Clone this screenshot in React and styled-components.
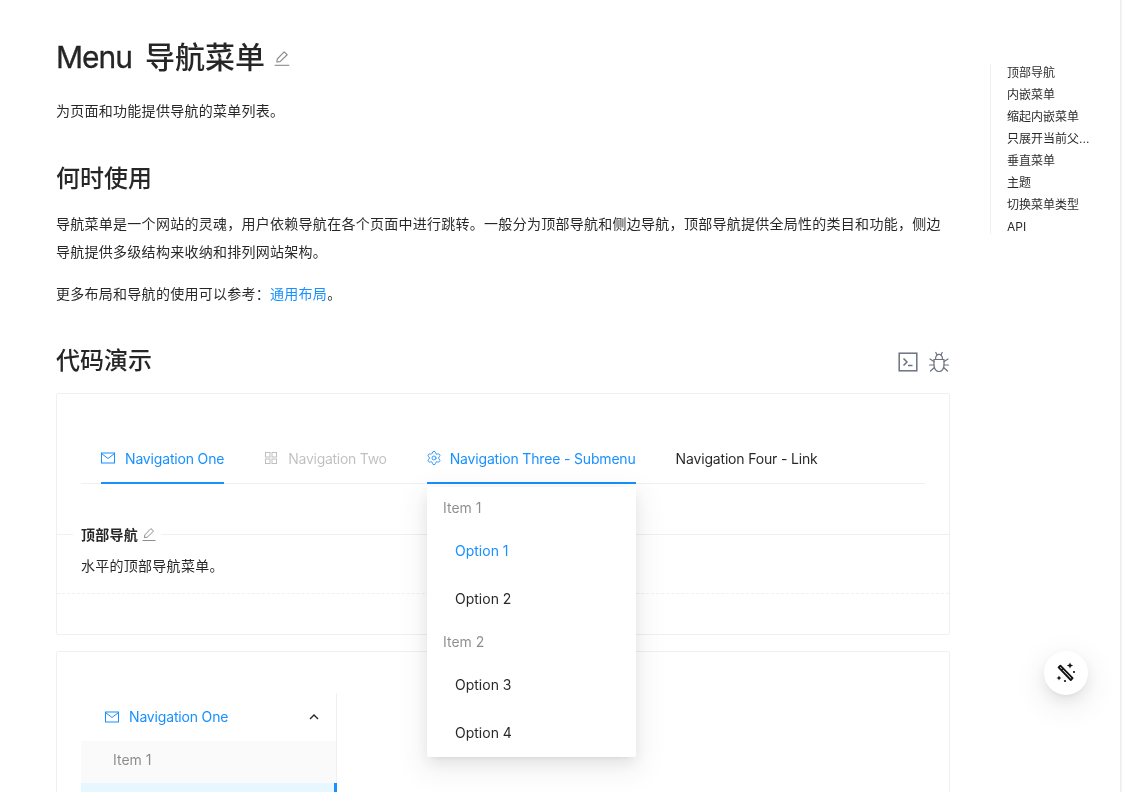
import React from "react";
import styled, { createGlobalStyle } from "styled-components";
import { Settings } from "lucide-react";

const blue = "#1890ff";
const text = "rgba(0, 0, 0, 0.85)";

const GlobalStyle = createGlobalStyle`
  html, body { margin: 0; padding: 0; background: #fff; }
  body {
    font-family: Inter, "Noto Sans CJK SC", sans-serif;
    font-size: 14px;
    color: ${text};
  }
  * { box-sizing: border-box; }
`;

const Page = styled.div`
  position: relative;
  width: 1123px;
  height: 792px;
  overflow: hidden;
  display: flex;
  will-change: opacity;
`;

const Content = styled.div`
  width: 1121px;
  height: 792px;
  border-right: 1px solid #ececec;
  box-shadow: 1px 0 3px rgba(0, 0, 0, 0.05);
  display: flex;
  overflow: hidden;
`;

const Main = styled.main`
  width: 950px;
  flex: none;
  padding: 36px 0 0 56px;
`;

const Title = styled.h1`
  margin: 0 0 19px;
  font-size: 30px;
  line-height: 42px;
  font-weight: 500;
  display: flex;
  align-items: center;
`;

const TitleLatin = styled.span`
  letter-spacing: -1px;
  margin-right: 13px;
  font-weight: 400;
  -webkit-text-stroke: 0.3px currentColor;
`;

const EditIcon = ({ size = 16, className }) => (
  <svg className={className} width={size} height={size} viewBox="0 0 16 16" fill="none" stroke="#8c8c8c" strokeWidth="1">
    <path d="M3.4 11.6 3.8 8.9 9.9 2.6 12.6 5.1 6.3 11.2Z" strokeLinejoin="round" />
    <path d="M1.5 14.5H14.5" />
  </svg>
);

const TitleEdit = styled(EditIcon)`
  margin: 2px 0 0 8px;
`;

const Para = styled.p`
  margin: 0 0 14px;
  line-height: 28px;
  font-size: 14px;
  letter-spacing: 0.27px;
`;

const Heading = styled.h2`
  margin: 0;
  font-size: 24px;
  line-height: 32px;
  font-weight: 500;
`;

const WhenHeading = styled(Heading)`
  margin: 38px 0 15px;
`;

const DemoHeader = styled.div`
  display: flex;
  align-items: center;
  justify-content: space-between;
  margin: 37px 0 16px;
  height: 32px;
`;

const Actions = styled.div`
  display: flex;
  align-items: center;
  gap: 10px;
  margin-top: 2px;
  color: #6b7280;
`;

const Link = styled.a`
  color: ${blue};
  text-decoration: none;
`;

const Card = styled.section`
  position: relative;
  margin: 0 0 16px;
  border: 1px solid #f0f0f0;
  border-radius: 2px;
`;

const TopCard = styled(Card)`
  height: 242px;
`;

const DemoArea = styled.div`
  padding: 42px 24px 50px;
`;

const TopNav = styled.ul`
  list-style: none;
  margin: 0;
  padding: 0 0 0 20px;
  height: 48px;
  display: flex;
  gap: 40px;
  border-bottom: 1px solid #f0f0f0;
`;

const NavItem = styled.li`
  height: 48px;
  padding-bottom: 2px;
  display: flex;
  align-items: center;
  gap: 10px;
  white-space: nowrap;
  letter-spacing: ${(p) => (p.$disabled ? "-0.27px" : "-0.17px")};
  color: ${(p) => (p.$disabled ? "rgba(0,0,0,0.25)" : p.$active ? blue : text)};
  border-bottom: 2px solid ${(p) => (p.$active ? blue : "transparent")};
`;

const Meta = styled.div`
  border-top: 1px solid #f0f0f0;
`;

const MetaTitle = styled.div`
  display: flex;
  align-items: center;
  gap: 3px;
  width: 88px;
  height: 20px;
  margin: -11px 0 8px 16px;
  padding-left: 8px;
  background: #fff;
  font-weight: 600;
  letter-spacing: 0.27px;
`;

const MetaDesc = styled.p`
  margin: 0;
  padding: 0 24px;
  line-height: 28px;
  height: 42px;
  letter-spacing: 0.27px;
  border-bottom: 1px dashed #f0f0f0;
`;

const SideMenu = styled.div`
  margin: 41px 0 0 24px;
  width: 256px;
  border-right: 1px solid #f0f0f0;
`;

const SubTitle = styled.div`
  height: 48px;
  padding: 0 17px 1px 24px;
  display: flex;
  align-items: center;
  gap: 10px;
  letter-spacing: -0.17px;
  color: ${blue};
`;

const Caret = styled.svg`
  margin-left: auto;
`;

const GroupTitle = styled.div`
  background: #fafafa;
  height: 42px;
  padding: 0 0 6px 32px;
  display: flex;
  align-items: center;
  color: rgba(0, 0, 0, 0.45);
`;

const SelectedRow = styled.div`
  height: 40px;
  background: #e6f7ff;
  border-right: 3px solid ${blue};
  margin-right: -1px;
`;

const Dropdown = styled.div`
  position: absolute;
  left: 427px;
  top: 487px;
  width: 209px;
  height: 270px;
  background: #fff;
  border-radius: 2px;
  box-shadow: 0 3px 6px -4px rgba(0, 0, 0, 0.12), 0 6px 16px 0 rgba(0, 0, 0, 0.08), 0 9px 28px 8px rgba(0, 0, 0, 0.05);
`;

const DropGroup = styled.div`
  height: 42px;
  margin-bottom: 2px;
  padding: 0 16px 2px;
  display: flex;
  align-items: center;
  color: rgba(0, 0, 0, 0.45);
`;

const DropItem = styled.div`
  height: 40px;
  padding: 0 0 2px 28px;
  display: flex;
  align-items: center;
  color: ${(p) => (p.$active ? blue : text)};

  & + & {
    margin-top: 8px;
  }

  & + ${DropGroup} {
    margin-top: 2px;
  }
`;

const Anchor = styled.nav`
  position: absolute;
  left: 990px;
  top: 64px;
  width: 104px;
  height: 170px;
  border-left: 1px solid #f0f0f0;
  padding-left: 16px;
`;

const AnchorLink = styled.div`
  height: 22px;
  line-height: 17px;
  padding-top: 0;
  font-size: 12px;
  white-space: nowrap;
  overflow: hidden;
  text-overflow: ellipsis;
`;

const FloatButton = styled.div`
  position: absolute;
  left: 1044px;
  top: 651px;
  width: 44px;
  height: 44px;
  border-radius: 50%;
  background: #fff;
  box-shadow: 0 3px 6px -4px rgba(0, 0, 0, 0.12), 0 6px 16px 0 rgba(0, 0, 0, 0.08), 0 9px 28px 8px rgba(0, 0, 0, 0.05);
  display: flex;
  align-items: center;
  justify-content: center;
`;

const Mail = ({ color = blue }) => (
  <svg width="14" height="14" viewBox="0 0 14 14" fill="none" stroke={color} strokeWidth="1">
    <rect x="0.5" y="2" width="13" height="10" />
    <path d="M0.8 2.8 7 7.5 13.2 2.8" />
  </svg>
);

const Apps = () => (
  <svg width="14" height="14" viewBox="0 0 14 14" fill="none" stroke="rgba(0,0,0,0.25)" strokeWidth="1">
    <rect x="1.5" y="1.5" width="4.5" height="4.5" />
    <rect x="8" y="1.5" width="4.5" height="4.5" />
    <rect x="1.5" y="8" width="4.5" height="4.5" />
    <rect x="8" y="8" width="4.5" height="4.5" />
  </svg>
);

const Gear = styled(Settings)`
  margin: 0 -2px 0 -1px;
  flex: none;
`;

const CodeIcon = () => (
  <svg width="20" height="20" viewBox="0 0 20 20" fill="none" stroke="#6b7280" strokeWidth="1.5">
    <rect x="1.2" y="1.2" width="17.6" height="17.6" />
    <path d="M5.5 6.5 9 10 5.5 13.5" />
    <path d="M10 13.5H14.5" />
  </svg>
);

const BugIcon = () => (
  <svg width="22" height="22" viewBox="0 0 22 22" fill="none" stroke="#6b7280" strokeWidth="1.2" strokeLinecap="round">
    <path d="M6 8.5H16V14C16 17.5 14 20.5 11 20.5S6 17.5 6 14Z" />
    <path d="M7.5 8.5C7.5 5 9 3.4 11 3.4S14.5 5 14.5 8.5" />
    <path d="M7.8 1.5 9 3.8M14.2 1.5 13 3.8" />
    <path d="M2 8 6 10.5M20 8 16 10.5M1.5 14H6M20.5 14H16M2.5 20 6.4 16.5M19.5 20 15.6 16.5" />
  </svg>
);

const Wand = () => (
  <svg width="22" height="22" viewBox="0 0 22 22" fill="#111">
    <path d="M3.6 5.4 5.4 3.6 17.6 16.2 15.8 18Z" fill="none" stroke="#111" strokeWidth="1.8" strokeLinejoin="round" />
    <path d="M6 7.6 7.8 5.8 8.8 6.8 7 8.6Z" />
    <path d="M15 .4 15.9 2.6 18.1 3.5 15.9 4.4 15 6.6 14.1 4.4 11.9 3.5 14.1 2.6Z" />
    <path d="M4 13.5 4.8 15.2 6.5 16 4.8 16.8 4 18.5 3.2 16.8 1.5 16 3.2 15.2Z" />
    <circle cx="19" cy="10" r="1.1" />
    <circle cx="10" cy="19" r="1.1" />
  </svg>
);

const anchors = ["顶部导航", "内嵌菜单", "缩起内嵌菜单", "只展开当前父...", "垂直菜单", "主题", "切换菜单类型", "API"];

export default function App() {
  return (
    <>
      <GlobalStyle />
      <Page>
        <Content>
          <Main>
            <Title>
              <TitleLatin>Menu</TitleLatin>
              导航菜单
              <TitleEdit size={18} />
            </Title>
            <Para>为页面和功能提供导航的菜单列表。</Para>
            <WhenHeading>何时使用</WhenHeading>
            <Para>
              导航菜单是一个网站的灵魂，用户依赖导航在各个页面中进行跳转。一般分为顶部导航和侧边导航，顶部导航提供全局性的类目和功能，侧边导航提供多级结构来收纳和排列网站架构。
            </Para>
            <Para>
              更多布局和导航的使用可以参考：<Link>通用布局</Link>。
            </Para>
            <DemoHeader>
              <Heading>代码演示</Heading>
              <Actions>
                <CodeIcon />
                <BugIcon />
              </Actions>
            </DemoHeader>
            <TopCard>
              <DemoArea>
                <TopNav>
                  <NavItem $active>
                    <Mail />
                    Navigation One
                  </NavItem>
                  <NavItem $disabled>
                    <Apps />
                    Navigation Two
                  </NavItem>
                  <NavItem $active>
                    <Gear size={16} strokeWidth={1.3} color={blue} />
                    Navigation Three - Submenu
                  </NavItem>
                  <NavItem>Navigation Four - Link</NavItem>
                </TopNav>
              </DemoArea>
              <Meta>
                <MetaTitle>
                  顶部导航
                  <EditIcon size={16} />
                </MetaTitle>
                <MetaDesc>水平的顶部导航菜单。</MetaDesc>
              </Meta>
            </TopCard>
            <Card>
              <SideMenu>
                <SubTitle>
                  <Mail />
                  Navigation One
                  <Caret width="10" height="10" viewBox="0 0 10 10" fill="none" stroke={text} strokeWidth="1.4">
                    <path d="M1 7 5 3 9 7" />
                  </Caret>
                </SubTitle>
                <GroupTitle>Item 1</GroupTitle>
                <SelectedRow />
              </SideMenu>
            </Card>
          </Main>
        </Content>
        <Anchor>
          {anchors.map((a) => (
            <AnchorLink key={a}>{a}</AnchorLink>
          ))}
        </Anchor>
        <Dropdown>
          <DropGroup>Item 1</DropGroup>
          <DropItem $active>Option 1</DropItem>
          <DropItem>Option 2</DropItem>
          <DropGroup>Item 2</DropGroup>
          <DropItem>Option 3</DropItem>
          <DropItem>Option 4</DropItem>
        </Dropdown>
        <FloatButton>
          <Wand />
        </FloatButton>
      </Page>
    </>
  );
}
